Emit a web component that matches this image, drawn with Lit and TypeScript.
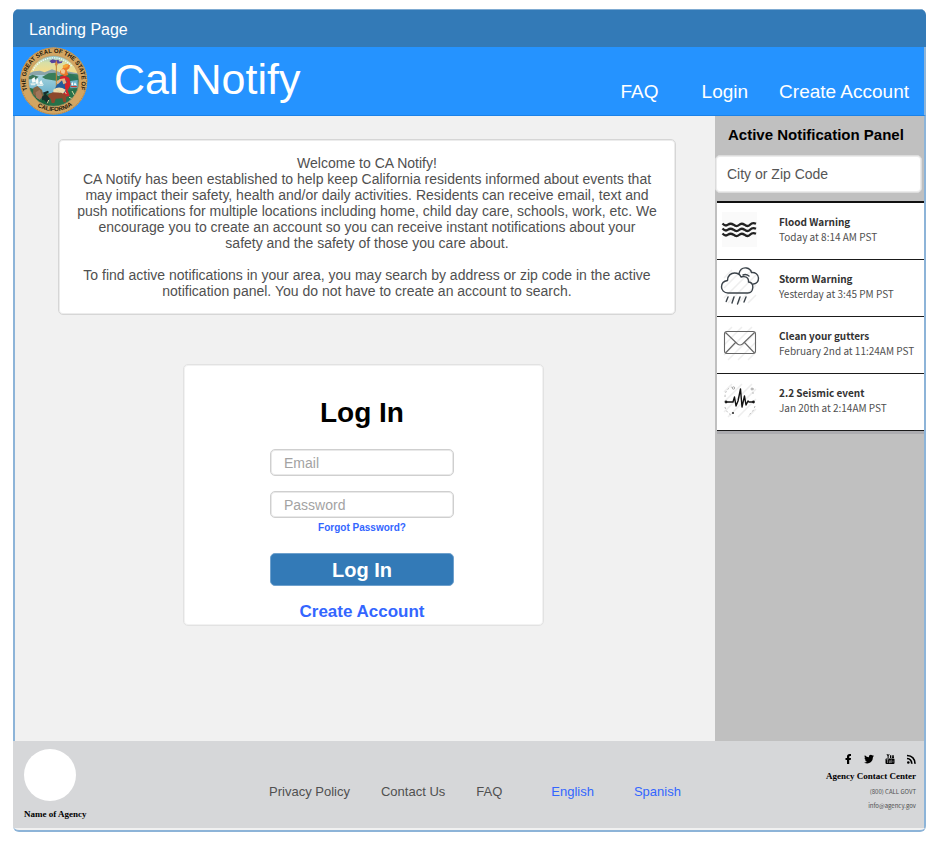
import { LitElement, html, css, svg } from "lit";
import { customElement } from "lit/decorators.js";

const floodIcon = svg`<svg viewBox="0 0 40 40" class="glyph" aria-hidden="true">
  <rect x="2" y="3" width="35" height="35" fill="#fafafa"/>
  <g fill="none" stroke="#222" stroke-width="2.300" stroke-linejoin="round">
    <path d="M2.500 14.500q3 3.200 5.500 1.200t5.500 0q3 2.600 5.500 0.300t5.500-0.300q3 2.600 5.500 0t6-1"/>
    <path d="M2.500 19.500q3 3.200 5.500 1.200t5.500 0q3 2.600 5.500 0.300t5.500-0.300q3 2.600 5.500 0t6-1"/>
    <path d="M2.500 24.500q3 3.200 5.500 1.200t5.500 0q3 2.600 5.500 0.300t5.500-0.300q3 2.600 5.500 0t6-1"/>
  </g></svg>`;

const hatch = svg`<path d="M4 12l8-8M4 22L22 4M4 32L32 4M8 37L36 9M18 37l18-18M28 37l8-8" stroke="#eeeeee" stroke-width="1.500" fill="none"/>`;

const stormIcon = svg`<svg viewBox="0 0 40 40" class="glyph" aria-hidden="true">
  ${hatch}
  <g fill="none" stroke="#3b434a" stroke-width="1.400" stroke-linecap="round" stroke-linejoin="round">
    <path d="M19 7.500C20 3.500 23 1.500 26.500 2c3 .500 4.500 2.500 5 4.500 3.500-.500 7 2 7 5.500 0 3-1.500 5.500-5 6"/>
    <path d="M8 27c-4 0-6.500-3-6.500-6 0-3.500 2.500-6 6-6.500C7.500 9.500 11 7 14.500 7c3 0 5.500 1.500 6.500 4 1-.500 2.300-.700 3.500-.400 2.700.600 4.300 2.700 4 5.400 3 .300 4.500 2.800 4.300 5.500-.200 3-2 5.500-5 5.500z"/>
    <path d="M23 9q3-1.500 6 1M8 31l-1.800 4.500M14 31l-2 6M20 31l-2.500 7M26 31l-2 5"/>
  </g></svg>`;

const mailIcon = svg`<svg viewBox="0 0 40 40" class="glyph" aria-hidden="true">
  ${hatch}
  <g fill="none" stroke="#666" stroke-width="1.100">
    <rect x="4.500" y="8.500" width="31" height="22" rx="2.500"/>
    <path d="M5.500 9.500L17.500 21q2.500 2 5 0L34.500 9.500M5.500 30L15.500 19.500M34.500 30L24.500 19.500"/>
  </g></svg>`;

const seismicIcon = svg`<svg viewBox="0 0 40 40" class="glyph" aria-hidden="true">
  ${hatch}
  <g fill="none" stroke="#bbb" stroke-width="1" stroke-dasharray="2 2">
    <path d="M5 17q0-8 7-10M33 8v6M5 27q1 5 6 8M35 26q-2 7-7 9"/>
  </g>
  <g fill="#222"><circle cx="6" cy="22" r="1.400"/><circle cx="33.500" cy="22" r="1.400"/><circle cx="13" cy="33" r="1"/></g>
  <g fill="#fff" stroke="#888" stroke-width=".700"><circle cx="13.500" cy="8" r="1.200"/><circle cx="32" cy="9" r="1"/></g>
  <path d="M6 22h7l1.500-5 1.500 9 2-5 2.500-12 1.500 18 2.500-11 1.500 9 2-4 1 1h5" fill="none" stroke="#111" stroke-width="1.400" stroke-linejoin="round"/>
</svg>`;

const seal = svg`<svg class="seal" viewBox="18 15 204 204" role="img" aria-label="The Great Seal of the State of California">
  <defs>
    <path id="arc-top" d="M50 165A84 84 0 1 1 189 163"/>
    <path id="arc-bottom" d="M50 176A93 93 0 0 0 194 171"/>
    <clipPath id="disc"><circle cx="119" cy="117" r="76"/></clipPath>
    <linearGradient id="sky" x1="0" y1="0" x2="0" y2="1">
      <stop offset="0" stop-color="#7fc4dc"/><stop offset=".300" stop-color="#d8dfa6"/><stop offset=".600" stop-color="#f2dc8c"/>
    </linearGradient>
    <linearGradient id="bay" x1="0" y1="0" x2="0" y2="1">
      <stop offset="0" stop-color="#a5d2dc"/><stop offset="1" stop-color="#3f9ac2"/>
    </linearGradient>
  </defs>
  <circle cx="119" cy="117" r="101" fill="#d2a562"/>
  <circle cx="119" cy="117" r="99" fill="none" stroke="#a97a3c" stroke-width="3" stroke-dasharray="3 3"/>
  <g clip-path="url(#disc)">
    <rect x="40" y="38" width="160" height="80" fill="url(#sky)"/>
    <path d="M40 96l20-8 18-2 14 5 22-9 24 9 20-3 44 8v20H40z" fill="#8ba4aa"/>
    <rect x="40" y="99" width="160" height="100" fill="url(#bay)"/>
    <path d="M84 105l20-11 20-2 8 10 24-8 46 4v16l-46-2-30 4-32-5z" fill="#387d59"/>
    <path d="M40 105l16-7 18 6-10 8H40z" fill="#3c765a"/>
    <path d="M150 94l20 2 30 18v86l-42-4-12-48z" fill="#2d755a"/>
    <path d="M169 117l22-3v23l-22 2z" fill="#72b5cc"/>
    <path d="M40 136l24 6 20 14 62-6 54-12v62H40z" fill="#267149"/>
    <path d="M58 138l12-6 14 12 5 18-12 12-20-18z" fill="#836444"/>
    <path d="M65 151l12-8 8 20-8 10-10-5z" fill="#a17559"/>
    <path d="M53 111l9-6 2 15-9 2zM64 116l8-8 2 17h-8zM76 121l6-7 5 12H77z" fill="#f7fbf8"/>
    <path d="M49 124h17l-3 6H51zM68 127h22l-4 5H70z" fill="#dfece9"/>
    <path d="M171 126l6-6v11zM179 128l4-7 5 9z" fill="#fff"/><path d="M169 132h21l-3 4h-15z" fill="#c73a31"/>
    <path d="M106 57l10-5 10 3 7-2 4 6 9-2-3 6-14 2-7-3-9 2z" fill="#56449c"/>
    <path d="M127 61v91" stroke="#bd8230" stroke-width="3"/><path d="M127 54l4 13-4 9-4-9z" fill="#d78a3c"/>
    <path d="M138 104l14-4 14 8 4 20-9 17 6 17-15 3-26-6 4-20 10-6z" fill="#d2242c"/>
    <path d="M141 116l-13 13-9 20 18 10 18-9-3-23 7-7-8-8z" fill="#235d9d"/>
    <path d="M136 112l-9 10 5 4 12-11 4 12 9-4-5-14z" fill="#e7b381"/>
    <path d="M118 143q16-13 37 0l-12 18-25-7z" fill="#f0ddb0"/>
    <path d="M145 80l5-10 8-4 10 3-2 10-8 6 5 14-11 3-13-6-1-9z" fill="#e9782b"/>
    <path d="M140 83l8-2 6 5-3 10-9-2z" fill="#f1c994"/>
    <path d="M146 71q9-8 17-2l-3 7-12 3z" fill="#f6a735"/>
    <path d="M103 158l13-7 26 1 15 8-1 21h-8l-3-12-20 1-4 13h-8l-3-13-8-4z" fill="#8d482c"/>
    <path d="M84 164l11-9 12 14-5 17-12 3-6-10zM86 152l16-6 3 5-13 8z" fill="#182d29"/>
    <path d="M66 168l13 8 10-3 19 18h-22l-20-10z" fill="#16623b"/>
    <path d="M138 150l-10-5M152 148l5 8M104 174l-4 10M174 147l10 18M165 166l15 6" stroke="#d9dba1" stroke-width="3"/>
  </g>
  <circle cx="119" cy="117" r="76" fill="none" stroke="#bc945d" stroke-width="2"/>
  <path d="M57 85A70 70 0 0 1 174 74" fill="none" stroke="#ecfbff" stroke-width="4" stroke-dasharray="4 3"/>
  <g class="motto" text-anchor="middle">
    <text><textPath href="#arc-top" startOffset="50%">THE GREAT SEAL OF THE STATE OF</textPath></text>
    <text><textPath href="#arc-bottom" startOffset="50%">CALIFORNIA</textPath></text>
  </g>
</svg>`;

const alerts = [
  { icon: floodIcon, title: "Flood Warning", when: "Today at 8:14 AM PST" },
  { icon: stormIcon, title: "Storm Warning", when: "Yesterday at 3:45 PM PST" },
  { icon: mailIcon, title: "Clean your gutters", when: "February 2nd at 11:24AM PST" },
  { icon: seismicIcon, title: "2.2 Seismic event", when: "Jan 20th at 2:14AM PST" },
];

const socials = [
  { name: "Facebook", art: svg`<path d="M4 10V6H2.500V4H4V2.600C4 1 5 0 6.500 0H8v2H7q-.800 0-.800.900V4H8L7.700 6H6.200v4z"/>` },
  { name: "Twitter", art: svg`<path d="M0 8.500q2 .200 3-.800-1.500-.200-2-1.500h1Q.500 5.500.500 3.800l.9.300Q0 2.700.900 1.200q1.700 2 4 2.100Q4.600 1 6.800.800q.900 0 1.500.700L9.800 1l-.9 1.200L10 2 9 3.100Q9 6 7 8 4 10.500 0 8.500z"/>` },
  { name: "YouTube", art: svg`<path d="M1.500 0h1l.6 1.500L3.700 0h.9L3.600 2.300V4h-1V2.300zM5 1.200h1.300V4H5zM7 1.200h.8v2h.4v-2H9V4H7z"/><rect x=".500" y="4.500" width="9" height="5.500" rx="1"/><path d="M1.500 5.600h2M2.500 5.600V9M4.300 6.400v2.300h1V6.400M6.300 5.500V9M8 6.500v2" stroke="#d6d7d9" stroke-width=".500" fill="none"/>` },
  { name: "RSS feed", art: svg`<circle cx="2.300" cy="8.500" r="1.300"/><path d="M1 4.500q4.500.300 4.800 5.200M1 1.500q7.700.400 8 8.200" fill="none" stroke="#000" stroke-width="1.700"/>` },
];

@customElement("app-root")
export class AppRoot extends LitElement {
  static styles = css`
    :host {
      display: block;
      padding: 9px 11px 10px 13px;
      background: #fff;
      color: #505050;
      font: 14px/16px "Liberation Sans", Arial, sans-serif;
    }
    * { box-sizing: border-box; }
    h1, h2, p { margin: 0; }
    a { color: inherit; text-decoration: none; }
    .frame {
      display: flex;
      flex-direction: column;
      min-height: calc(100vh - 19px);
      border-bottom: 2px solid #8db4d8;
      border-radius: 6px;
      background: #f1f1f1;
      overflow: hidden;
    }
    .titlebar {
      height: 38px;
      padding: 0 16px;
      border-top: 1px solid #7fabd2;
      background: #337ab7;
      color: #fff;
      font-size: 16px;
      line-height: 39px;
    }
    .header {
      display: flex;
      align-items: center;
      height: 69px;
      padding: 0 15px 0 7px;
      border-right: 2px solid #8db4d8;
      border-bottom: 1px solid #1b82e8;
      background: #2593ff;
      color: #fff;
    }
    .seal { width: 68px; height: 68px; flex: none; }
    .motto { font: bold 18px "Liberation Sans", Arial, sans-serif; fill: #1d1609; }
    .header h1 {
      margin-left: 26px;
      padding-bottom: 4px;
      font-size: 43px;
      font-weight: normal;
      line-height: 48px;
    }
    .nav {
      display: flex;
      gap: 31px;
      margin-left: auto;
      padding-top: 22px;
      font-size: 19px;
      line-height: 22px;
    }
    .nav .first { margin-right: 12px; }
    .body {
      flex: 1;
      display: grid;
      grid-template-columns: minmax(0, 1fr) 209px;
      border: solid #8db4d8;
      border-width: 0 2px;
    }
    .content { padding: 23px 3px 0 0; }
    .card {
      border: 1px solid #d6d6d6;
      border-radius: 5px;
      box-shadow: inset 0 0 0 1px #ececec;
      background: #fff;
      text-align: center;
    }
    .welcome { margin: 0 36px 0 43px; padding: 15px 11px; }
    .welcome p + p + p { margin-top: 16px; }
    .login {
      display: flex;
      flex-direction: column;
      align-items: center;
      max-width: 361px;
      margin: 49px auto 24px;
      padding: 32px 3px 3px 0;
      border-color: #e2e2e2;
      box-shadow: inset 0 0 0 1px #f2f2f2;
    }
    .login h2 { color: #000; font-size: 28px; line-height: 32px; }
    .field {
      width: 184px;
      height: 27px;
      margin-top: 20px;
      padding: 0 13px;
      border: 1px solid #cfcfcf;
      border-radius: 5px;
      box-shadow: inset 0 0 0 1px #e9e9e9;
      background: #fff;
      font: inherit;
      color: #505050;
    }
    .field + .field { margin-top: 15px; }
    .field::placeholder { color: #a3a3a3; opacity: 1; }
    .link { color: #3366ff; font-weight: bold; }
    .forgot { margin-top: 4px; font-size: 10px; line-height: 12px; }
    .submit {
      width: 184px;
      height: 33px;
      margin: 19px 0 16px;
      padding: 0;
      border: 1px solid #6fa1cd;
      border-radius: 5px;
      background: #337ab7;
      color: #fff;
      font: bold 20px/24px "Liberation Sans", Arial, sans-serif;
    }
    .create { font-size: 17px; line-height: 20px; }
    .panel { background: #c0c0c0; }
    .panel h2 {
      padding: 11px 0 12px 13px;
      color: #000;
      font-size: 15px;
      line-height: 16px;
    }
    .search {
      display: block;
      width: 207px;
      height: 38px;
      padding: 0 11px;
      border: 1px solid #dcdcdc;
      border-radius: 5px;
      box-shadow: inset 0 0 0 1px #ececec;
      background: #fff;
      color: #505050;
      font: inherit;
    }
    .search::placeholder { color: #555; opacity: 1; }
    .alerts {
      list-style: none;
      margin: 8px 0 0 2px;
      padding: 0;
      border-top: 2px solid #111;
      box-shadow: 0 3px 0 #acacb0;
    }
    .alert {
      display: flex;
      align-items: center;
      height: 57px;
      padding: 0 3px 4px;
      border-bottom: 1px solid #1a1a1a;
      background: #fff;
      color: #505050;
      font: 10px/15px "Noto Sans CJK SC", "Noto Sans", sans-serif;
    }
    .alert p { white-space: nowrap; }
    .alert .title { color: #333; font-weight: bold; }
    .glyph { flex: none; width: 40px; height: 40px; margin-right: 19px; }
    .footer {
      display: grid;
      grid-template-columns: 1fr auto 1fr;
      height: 87px;
      margin-bottom: 2px;
      padding: 8px 8px 0 11px;
      border-right: 2px solid #8db4d8;
      background: #d6d7d9;
    }
    .serif { color: #000; font: bold 9px/12px "Liberation Serif", "Times New Roman", serif; }
    .logo { width: 52px; height: 52px; margin-bottom: 7px; border-radius: 50%; background: #fff; }
    .links {
      display: flex;
      gap: 31px;
      padding: 35px 0 0 10px;
      font-size: 13px;
    }
    .lang { color: #3366ff; }
    .links .lang { margin-left: 18px; }
    .links .lang + .lang { margin-left: 9px; }
    .contact { text-align: right; font: 6px/14px "Noto Sans CJK SC", "Noto Sans", sans-serif; }
    .social { display: flex; justify-content: flex-end; gap: 11px; height: 16px; padding-top: 5px; }
    .social a { display: block; width: 10px; height: 10px; }
    .social svg { display: block; width: 10px; height: 10px; }
    .contact .serif { margin: 5px 0 3px; }
  `;

  render() {
    return html`
      <div class="frame">
        <div class="titlebar">Landing Page</div>
        <header class="header">
          ${seal}
          <h1>Cal Notify</h1>
          <nav class="nav" aria-label="Main">
            <a class="first" href="#faq">FAQ</a>
            <a href="#login">Login</a>
            <a href="#create">Create Account</a>
          </nav>
        </header>
        <div class="body">
          <main class="content">
            <section class="card welcome">
              <p>Welcome to CA Notify!</p>
              <p>CA Notify has been established to help keep California residents informed about events that may impact their safety, health and/or daily activities. Residents can receive email, text and push notifications for multiple locations including home, child day care, schools, work, etc. We encourage you to create an account so you can receive instant notifications about your safety&nbsp;and the safety of those you care about.</p>
              <p>To find active notifications in your area, you may search by address or zip code in the active notification panel. You do not have to create an account to search.</p>
            </section>
            <form class="card login" id="login" @submit=${(e: Event) => e.preventDefault()}>
              <h2>Log In</h2>
              <input class="field" type="email" placeholder="Email" aria-label="Email">
              <input class="field" type="password" placeholder="Password" aria-label="Password">
              <a class="link forgot" href="#forgot">Forgot Password?</a>
              <button class="submit" type="submit">Log In</button>
              <a class="link create" href="#create">Create Account</a>
            </form>
          </main>
          <aside class="panel">
            <h2>Active Notification Panel</h2>
            <input class="search" type="search" placeholder="City or Zip Code" aria-label="City or Zip Code">
            <ul class="alerts">
              ${alerts.map((a) => html`
                <li class="alert">${a.icon}<div><p class="title">${a.title}</p><p>${a.when}</p></div></li>`)}
            </ul>
          </aside>
        </div>
        <footer class="footer">
          <div>
            <div class="logo"></div>
            <p class="serif">Name of Agency</p>
          </div>
          <nav class="links" aria-label="Footer">
            <a href="#privacy">Privacy Policy</a>
            <a href="#contact">Contact Us</a>
            <a href="#faq">FAQ</a>
            <a class="lang" href="#en">English</a>
            <a class="lang" href="#es">Spanish</a>
          </nav>
          <div class="contact">
            <div class="social">
              ${socials.map((s) => html`<a href="#social" aria-label=${s.name}><svg viewBox="0 0 10 10" aria-hidden="true">${s.art}</svg></a>`)}
            </div>
            <p class="serif">Agency Contact Center</p>
            <p>(800) CALL GOVT</p>
            <p>info@agency.gov</p>
          </div>
        </footer>
      </div>`;
  }
}
